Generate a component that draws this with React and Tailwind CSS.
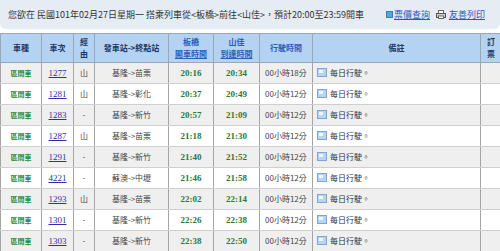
import React from "react";

const rows = [
  ["1277", "山", "基隆->苗栗", "20:16", "20:34", "00小時18分"],
  ["1281", "山", "基隆->彰化", "20:37", "20:49", "00小時12分"],
  ["1283", "-", "基隆->新竹", "20:57", "21:09", "00小時12分"],
  ["1287", "山", "基隆->苗栗", "21:18", "21:30", "00小時12分"],
  ["1291", "-", "基隆->新竹", "21:40", "21:52", "00小時12分"],
  ["4221", "-", "蘇澳->中壢", "21:46", "21:58", "00小時12分"],
  ["1293", "山", "基隆->苗栗", "22:02", "22:14", "00小時12分"],
  ["1301", "-", "基隆->新竹", "22:26", "22:38", "00小時12分"],
  ["1303", "-", "基隆->新竹", "22:38", "22:50", "00小時12分"],
];

const cjk = { fontFamily: '"Noto Sans CJK TC", "Noto Sans", sans-serif' };
const serif = { fontFamily: '"Liberation Serif", "Noto Sans CJK TC", serif' };

function NoteIcon() {
  return (
    <span className="inline-block w-[10px] h-[9px] border border-[#7fa6d3] bg-[#b9d4f0] mr-[3px] align-[-1px] relative">
      <span className="absolute left-[1px] top-[1px] w-[4px] h-[3px] bg-white/80" />
    </span>
  );
}

export default function App() {
  const th = "border border-[#9aa7b5] bg-[#b4d2f1] text-[#1d3766] font-bold text-[8px] leading-[12px] text-center p-0";
  const td = "border-x border-x-[#a5a5a5] border-y border-y-[#cfcfcf] p-0 text-center h-[21px] leading-[12px]";
  return (
    <div className="w-[500px] h-[251px] overflow-hidden bg-white leading-[12px]" style={cjk}>
      <div className="h-[29px] bg-[#e5ecf3] rounded-bl-[6px] rounded-br-[6px] flex items-center pl-[8px] text-[9px] text-[#333]">
        <span className="whitespace-nowrap">您欲在 民國101年02月27日星期一 搭乘列車從&lt;板橋&gt;前往&lt;山佳&gt;，預計20:00至23:59開車</span>
        <span className="ml-[22px] flex items-center whitespace-nowrap">
          <span className="inline-block w-[7px] h-[7px] bg-[#5aa3e6] border border-[#2f7fcf] mr-[1px]" />
          <span className="text-[#2b57c4] underline">票價查詢</span>
        </span>
        <span className="ml-[6px] flex items-center whitespace-nowrap">
          <svg width="10" height="9" viewBox="0 0 10 9" className="mr-[3px]">
            <rect x="2.5" y="0.5" width="5" height="3" fill="#fff" stroke="#666" />
            <rect x="0.5" y="3.5" width="9" height="4" fill="#ccc" stroke="#555" />
            <rect x="2.5" y="6" width="5" height="2.5" fill="#fff" stroke="#666" />
          </svg>
          <span className="text-[#2b57c4] underline">友善列印</span>
        </span>
      </div>
      <div className="h-[4px]" />
      <table className="table-fixed border-collapse w-[505px]">
        <colgroup>
          <col className="w-[41px]" />
          <col className="w-[32px]" />
          <col className="w-[21px]" />
          <col className="w-[74px]" />
          <col className="w-[45px]" />
          <col className="w-[46px]" />
          <col className="w-[53px]" />
          <col className="w-[168px]" />
          <col className="w-[25px]" />
        </colgroup>
        <thead>
          <tr className="h-[29px]">
            <th className={th}>車種</th>
            <th className={th}>車次</th>
            <th className={th}>經<br />由</th>
            <th className={th}>發車站-&gt;終點站</th>
            <th className={th}>
              <span className="text-[#2a5fb5]">板橋</span><br />
              <span className="text-[#2a5fb5] underline">開車時間</span>
            </th>
            <th className={th}>
              <span className="text-[#2a5fb5]">山佳</span><br />
              <span className="text-[#2a5fb5] underline">到達時間</span>
            </th>
            <th className={th}><span className="text-[#2a5fb5]">行駛時間</span></th>
            <th className={th}>備註</th>
            <th className={th + " text-left pl-[6px]"}>訂<br />票</th>
          </tr>
        </thead>
        <tbody>
          {rows.map((r, i) => (
            <tr key={r[0]} className={i % 2 === 0 ? "bg-[#efefef]" : "bg-white"}>
              <td className={td + " text-[7px] font-bold text-[#2f8a2f]"}>區間車</td>
              <td className={td + " text-[9px] text-[#2e2ea8]"} style={serif}>
                <span className="underline">{r[0]}</span>
              </td>
              <td className={td + " text-[8px] text-[#444]"}>{r[1]}</td>
              <td className={td + " text-[8px] text-[#444]"}>{r[2]}</td>
              <td className={td + " text-[9px] font-bold text-[#2f7a2f]"} style={serif}>{r[3]}</td>
              <td className={td + " text-[9px] font-bold text-[#2f7a2f]"} style={serif}>{r[4]}</td>
              <td className={td + " text-[8px] text-[#444] text-left pl-[5px] whitespace-nowrap"}>{r[5]}</td>
              <td className={td + " text-[8px] text-[#333] text-left pl-[4px] whitespace-nowrap"}>
                <NoteIcon />每日行駛。
              </td>
              <td className={td + " text-[8px]"}></td>
            </tr>
          ))}
        </tbody>
      </table>
    </div>
  );
}
